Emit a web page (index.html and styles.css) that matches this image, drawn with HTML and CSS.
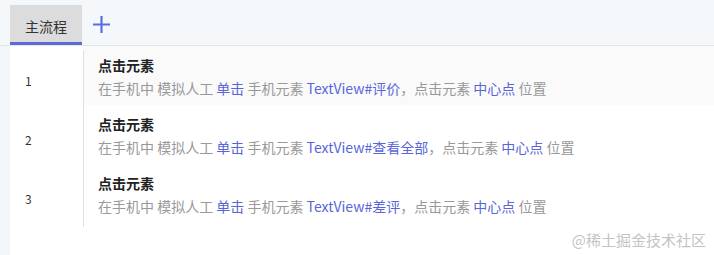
FILE: index.html
```html
<!DOCTYPE html>
<html lang="zh-CN">
<head>
  <meta charset="UTF-8">
  <title>主流程</title>
  <link rel="stylesheet" href="styles.css">
</head>
<body>

  <div class="tabs">
    <div class="tab active">主流程</div>
    <div class="tab-add">
      <svg width="19" height="19" viewBox="0 0 19 19"><path d="M9.5 1v17M1 9.5h17" stroke="#5b6ee1" stroke-width="2.2" fill="none"/></svg>
    </div>
  </div>

  <div class="steps">
    <div class="step hover">
      <div class="num">1</div>
      <div class="body">
        <div class="title">点击元素</div>
        <div class="desc">在手机中 模拟人工 <span class="hl">单击</span> 手机元素 <span class="hl">TextView#评价</span>，点击元素 <span class="hl">中心点</span> 位置</div>
      </div>
    </div>
    <div class="step">
      <div class="num">2</div>
      <div class="body">
        <div class="title">点击元素</div>
        <div class="desc">在手机中 模拟人工 <span class="hl">单击</span> 手机元素 <span class="hl">TextView#查看全部</span>，点击元素 <span class="hl">中心点</span> 位置</div>
      </div>
    </div>
    <div class="step">
      <div class="num">3</div>
      <div class="body">
        <div class="title">点击元素</div>
        <div class="desc">在手机中 模拟人工 <span class="hl">单击</span> 手机元素 <span class="hl">TextView#差评</span>，点击元素 <span class="hl">中心点</span> 位置</div>
      </div>
    </div>
  </div>

  <div class="watermark">@稀土掘金技术社区</div>

</body>
</html>
```

FILE: styles.css
```css
body {
  font-family: "Noto Sans CJK SC", "Noto Sans", sans-serif;
  background-color: #f3f6f9;
  margin: 0;
  height: 255px;
  overflow: hidden;
  position: relative;
}

.tabs {
  display: flex;
  align-items: flex-end;
  height: 46px;
  padding-left: 10px;
  background: #f5f8fb;
  border-bottom: 1px solid #e2e6ea;
  box-sizing: border-box;
}

.tab {
  width: 72px;
  height: 40px;
  line-height: 42px;
  text-align: center;
  font-size: 14px;
  color: #333;
  box-sizing: border-box;
}

.tab.active {
  background: #dcdcdc;
  border-bottom: 3px solid #5b6ad8;
}

.tab-add {
  height: 40px;
  padding: 10px 0 0 10px;
  box-sizing: border-box;
}

.steps {
  margin-left: 10px;
  background: #fff;
  height: 209px;
}

.step {
  display: flex;
  height: 59px;
}

.step:last-child {
  height: 63px;
}

.num {
  width: 74px;
  padding: 26px 0 0 15px;
  box-sizing: border-box;
  border-right: 1px solid #e0e0e0;
  font-size: 12px;
  line-height: 18px;
  color: #333;
}

.step:first-child .num {
  border-image: linear-gradient(to bottom, transparent 5px, #e0e0e0 5px) 1;
}

.body {
  flex: 1;
  padding: 9px 0 0 14px;
}

.step.hover .body {
  background: #fafafa;
}

.title {
  font-size: 14px;
  font-weight: bold;
  color: #222;
  line-height: 20px;
}

.desc {
  margin-top: 3px;
  font-size: 14px;
  color: #999;
  line-height: 20px;
}

.hl {
  color: #5866d9;
}

.watermark {
  position: absolute;
  right: 8px;
  bottom: 5px;
  font-size: 15px;
  color: #c4c4c4;
}
```
